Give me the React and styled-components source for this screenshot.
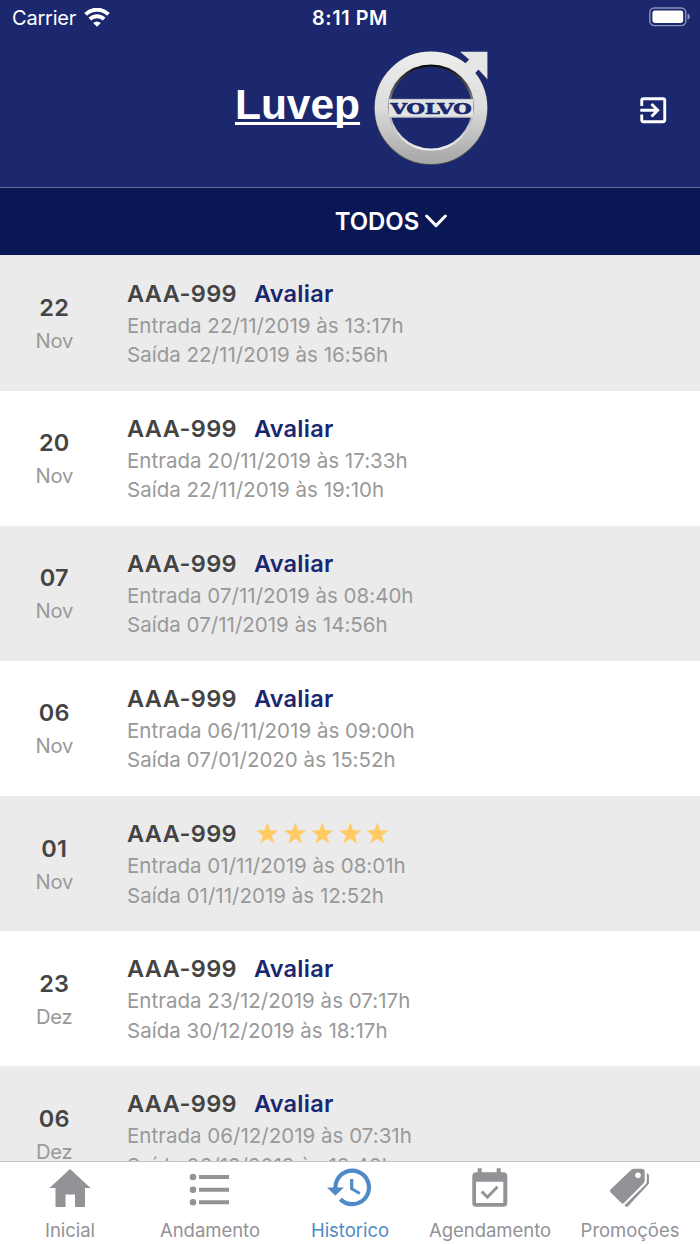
import React from "react"
import styled, {createGlobalStyle} from "styled-components"

const GlobalStyle = createGlobalStyle`
*{box-sizing:border-box;}
body{
margin:0;
background:#fff;
font-family:Inter,"Liberation Sans",sans-serif;
}
`

const Screen = styled.div`
height:1244px;
width:700px;
display:flex;
flex-direction:column;
overflow:hidden;
`

const Header = styled.header`
height:188px;
background:#1b286e;
border-bottom:1px solid #626b9a;
color:#fff;
flex-shrink:0;
`

const StatusBar = styled.div`
height:36px;
display:grid;
grid-template-columns:1fr auto 1fr;
align-items:center;
padding:0 9px 0 12px;
font-size:20px;
line-height:36px;
`

const Carrier = styled.div`
display:flex;
align-items:center;
gap:8px;
letter-spacing:-0.2px;

svg{margin-bottom:2px;}
`

const Clock = styled.div`
font-weight:600;
font-size:19.8px;
letter-spacing:0.6px;
margin-right:3px;
`

const BatteryBox = styled.div`
display:flex;
justify-content:flex-end;
padding-bottom:2px;
`

const Brand = styled.div`
height:151px;
display:grid;
grid-template-columns:1fr auto 1fr;
`

const BrandCenter = styled.div`
grid-column:2;
display:flex;
align-items:flex-start;
gap:10px;
padding:10px 0 0 27px;
`

const BrandName = styled.h1`
margin:34px 0 0;
font:bold 42.5px/50px "Liberation Sans",Arial,sans-serif;
text-decoration:underline;
text-decoration-thickness:2.5px;
text-underline-offset:2.5px;
text-decoration-skip-ink:none;
`

const LogoutButton = styled.button`
justify-self:end;
align-self:start;
margin:57px 30px 0 0;
padding:0;
border:0;
background:none;
color:#fff;
height:35px;
`

const FilterBar = styled.div`
height:67.4px;
flex-shrink:0;
background:#0a1755;
color:#fff;
display:flex;
align-items:center;
justify-content:center;
gap:6px;
padding:0 0 0 82px;
font-weight:600;
font-size:23.9px;

svg{margin-bottom:1px;}
`

const List = styled.main`
flex:1;
overflow:hidden;
`

const Row = styled.article`
height:135.15px;
display:flex;
background:${props=>props.$shaded ? "#ebebeb" : "#fff"};
`

const DateBox = styled.div`
width:108.5px;
padding-top:36.6px;
text-align:center;
`

const Day = styled.div`
font-weight:600;
font-size:23.5px;
line-height:32px;
color:#444;
letter-spacing:0.3px;
`

const Month = styled.div`
font-size:20.2px;
line-height:33px;
letter-spacing:-0.3px;
color:#999;
`

const Details = styled.div`
padding:20.2px 0 0 18.5px;
`

const TitleLine = styled.div`
height:35px;
display:flex;
align-items:center;
`

const Plate = styled.span`
width:127px;
font-weight:600;
font-size:23.5px;
letter-spacing:0.4px;
color:#444;
`

const Rate = styled.span`
font-weight:600;
font-size:23.5px;
letter-spacing:0.25px;
color:#192670;
`

const Stars = styled.div`
display:flex;
gap:5px;
padding:0 0 2px 2px;
`

const Info = styled.div`
font-size:20.5px;
line-height:29.4px;
letter-spacing:0.02px;
color:#999;
white-space:nowrap;
`

const TabBar = styled.nav`
height:83px;
flex-shrink:0;
border-top:1px solid #c4c4c4;
background:#fff;
display:grid;
grid-template-columns:repeat(5,1fr);
`

const Tab = styled.div`
display:flex;
flex-direction:column;
align-items:center;
padding-top:4px;
color:${props=>props.$active ? "#4f8ac8" : "#929297"};
`

const TabLabel = styled.span`
margin-top:6px;
font-size:18.5px;
line-height:28px;
letter-spacing:-0.03px;
white-space:nowrap;
`

const WifiIcon = ()=>(
	<svg width="26" height="19" viewBox="0 0 26 19" fill="none" stroke="#fff" strokeWidth="4">
		<path d="M1.6 6.4a16.2 16.2 0 0 1 22.8 0"/>
		<path d="M5.9 11.2a10 10 0 0 1 14.2 0"/>
		<path d="M13 18.8l-3.8-3.8a5.4 5.4 0 0 1 7.6 0z" fill="#fff" stroke="none"/>
	</svg>
)

const BatteryIcon = ()=>(
	<svg width="42" height="20" viewBox="0 0 42 20">
		<rect x=".8" y="1" width="36" height="17.6" rx="4.5" fill="none" stroke="#8d93b7" strokeWidth="1.4"/>
		<rect x="3.4" y="3.6" width="30.8" height="12.4" rx="2.4" fill="#fff"/>
		<path d="M38.6 6.6c3 1.2 3 5.2 0 6.4z" fill="#8d93b7"/>
	</svg>
)

const VolvoLogo = ()=>(
	<svg width="122" height="122" viewBox="0 0 122 122">
		<defs>
			<linearGradient id="metal" x1="0" y1="0" x2="0" y2="1">
				<stop offset="0" stopColor="#ececec"/>
				<stop offset=".5" stopColor="#dcdcdc"/>
				<stop offset="1" stopColor="#ababab"/>
			</linearGradient>
			<linearGradient id="bevel" x1="0" y1="0" x2="0" y2="1">
				<stop offset="0" stopColor="#0c0c0c"/>
				<stop offset=".35" stopColor="#6d6d6d"/>
				<stop offset=".7" stopColor="#c4c4c4"/>
				<stop offset="1" stopColor="#ededed"/>
			</linearGradient>
		</defs>
		<circle cx="61" cy="62.4" r="49.4" fill="none" stroke="#4a4b50" strokeWidth="14.6"/>
		<path d="M91 6.3h27v28l-9-9.8z" fill="#4a4b50"/>
		<circle cx="61" cy="61.8" r="49.3" fill="none" stroke="url(#metal)" strokeWidth="14"/>
		<path d="M90 5.7H117.3V33L108.5 23.5L103 29.5L93 19.5L99.3 13.5z" fill="#e6e6e6"/>
		<circle cx="61" cy="61.6" r="42" fill="none" stroke="url(#bevel)" strokeWidth="2.4"/>
		<path d="M18.8 52.9H103.2V71.4H18.8z" fill="#e4e4e4"/>
		<path d="M19.5 53.3H102.5M19.5 71H102.5" stroke="#b9babf" strokeWidth=".8"/>
		<text x="20.6" y="67.5" textLength="81" lengthAdjust="spacingAndGlyphs" fill="#1b286e" stroke="#1b286e" strokeWidth=".7" fontFamily="DejaVu Serif,serif" fontWeight="700" fontSize="14.6">VOLVO</text>
	</svg>
)

const LogoutIcon = ()=>(
	<svg width="34.5" height="34.5" viewBox="0 0 24 24" fill="currentColor">
		<path d="M10.09 15.59L11.5 17l5-5-5-5-1.41 1.41L12.67 11H3v2h9.67l-2.58 2.59zM19 3H5c-1.11 0-2 .9-2 2v4h2V5h14v14H5v-4H3v4c0 1.1.89 2 2 2h14c1.1 0 2-.9 2-2V5c0-1.1-.9-2-2-2z"/>
	</svg>
)

const ChevronIcon = ()=>(
	<svg width="22" height="14" viewBox="0 0 22 14" fill="none" stroke="#fff" strokeWidth="3" strokeLinecap="round" strokeLinejoin="round">
		<path d="M1.6 2l9.4 9.6L20.4 2"/>
	</svg>
)

const StarIcon = ()=>(
	<svg width="22.6" height="22" viewBox="0 0 22.6 22" fill="#ffcb62">
		<path d="M11.3.2l2.8 8 8.3.2-6.6 5.1 2.4 8-6.9-4.7-6.9 4.7 2.4-8L.2 8.4l8.3-.2z"/>
	</svg>
)

const icons = {
	home: <path d="M24 3L44.5 22H39V41H29V28.5H19.5V41H9.5V22H3.5z"/>,
	list: (
		<>
			<circle cx="7" cy="11" r="3.3"/>
			<circle cx="7" cy="23.7" r="3.3"/>
			<circle cx="7" cy="36.3" r="3.3"/>
			<path d="M13 9h30v4H13zM13 21.7h30v4H13zM13 34.3h30v4H13z"/>
		</>
	),
	history: (
		<path transform="translate(-1.1 -3.8) scale(2.1)" d="M13 3a9 9 0 0 0-9 9H1l3.89 3.89.07.14L9 12H6c0-3.87 3.13-7 7-7s7 3.13 7 7-3.13 7-7 7c-1.93 0-3.68-.79-4.94-2.06l-1.42 1.42A8.954 8.954 0 0 0 13 21a9 9 0 0 0 0-18zm-1 5v5l4.28 2.54.72-1.21-3.5-2.08V8H12z"/>
	),
	calendar: (
		<>
			<path fillRule="evenodd" d="M11.7 2.3h4v4h15v-4h4v4h2.8a3.8 3.8 0 0 1 3.8 3.8v26.8a3.8 3.8 0 0 1-3.8 3.8H10.1a3.8 3.8 0 0 1-3.8-3.8V10.1a3.8 3.8 0 0 1 3.8-3.8h1.6zM10 15.7V37h27.3V15.7z"/>
			<path d="M15.7 25.5l5.7 5.7L31.5 20.7" fill="none" stroke="currentColor" strokeWidth="3"/>
		</>
	),
	tags: (
		<>
			<path fillRule="evenodd" d="M25 3.9q1.2-1.2 3-1.2h7.6q3.1 0 3.1 3.1v8.4q0 2-1.3 3.3L18 37q-1.3 1.2-2.6 0L4.5 26.2q-1.3-1.3 0-2.6zM32 6.4a2.9 2.9 0 1 0 .01 0z"/>
			<path d="M40.8 7.2q2.2.4 2.2 2.6v6.4q0 1.5-1 2.5L22 40.2q-1.3 1.2-2.6 0l-.9-.9L40 17.9q.8-.8.8-2z"/>
		</>
	),
}

const TabIcon = ({name})=>(
	<svg width="48" height="44" viewBox="0 0 48 44" fill="currentColor">{icons[name]}</svg>
)

const visits = [
	{day:"22",month:"Nov",start:"22/11/2019 às 13:17h",end:"22/11/2019 às 16:56h"},
	{day:"20",month:"Nov",start:"20/11/2019 às 17:33h",end:"22/11/2019 às 19:10h"},
	{day:"07",month:"Nov",start:"07/11/2019 às 08:40h",end:"07/11/2019 às 14:56h"},
	{day:"06",month:"Nov",start:"06/11/2019 às 09:00h",end:"07/01/2020 às 15:52h"},
	{day:"01",month:"Nov",start:"01/11/2019 às 08:01h",end:"01/11/2019 às 12:52h",stars:5},
	{day:"23",month:"Dez",start:"23/12/2019 às 07:17h",end:"30/12/2019 às 18:17h"},
	{day:"06",month:"Dez",start:"06/12/2019 às 07:31h",end:"06/12/2019 às 18:40h"},
]

const tabs = [
	{icon:"home",label:"Inicial"},
	{icon:"list",label:"Andamento"},
	{icon:"history",label:"Historico",active:true},
	{icon:"calendar",label:"Agendamento"},
	{icon:"tags",label:"Promoções"},
]

const App = ()=>{
	return(
		<Screen>
			<GlobalStyle/>
			<Header>
				<StatusBar>
					<Carrier>Carrier <WifiIcon/></Carrier>
					<Clock>8:11 PM</Clock>
					<BatteryBox><BatteryIcon/></BatteryBox>
				</StatusBar>
				<Brand>
					<BrandCenter>
						<BrandName>Luvep</BrandName>
						<VolvoLogo/>
					</BrandCenter>
					<LogoutButton aria-label="Sair"><LogoutIcon/></LogoutButton>
				</Brand>
			</Header>
			<FilterBar>TODOS <ChevronIcon/></FilterBar>
			<List>
				{visits.map((visit,index)=>{
					return(
						<Row key={index} $shaded={index % 2 === 0}>
							<DateBox>
								<Day>{visit.day}</Day>
								<Month>{visit.month}</Month>
							</DateBox>
							<Details>
								<TitleLine>
									<Plate>AAA-999</Plate>
									{visit.stars
										? <Stars>{Array.from({length:visit.stars},(_,i)=><StarIcon key={i}/>)}</Stars>
										: <Rate>Avaliar</Rate>}
								</TitleLine>
								<Info>Entrada {visit.start}</Info>
								<Info>Saída {visit.end}</Info>
							</Details>
						</Row>
					)
				})}
			</List>
			<TabBar>
				{tabs.map((tab)=>{
					return(
						<Tab key={tab.label} $active={tab.active}>
							<TabIcon name={tab.icon}/>
							<TabLabel>{tab.label}</TabLabel>
						</Tab>
					)
				})}
			</TabBar>
		</Screen>
	)
}

export default App
